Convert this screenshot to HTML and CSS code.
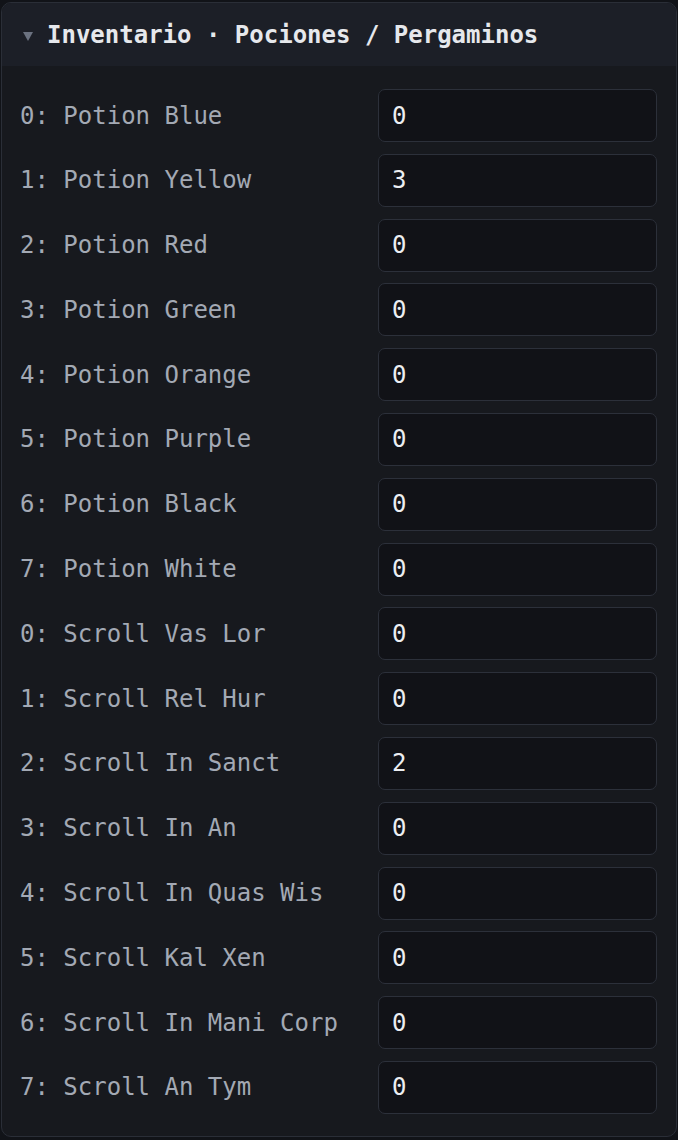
FILE: index.html
```html
<!DOCTYPE html>
<html lang="es">
<head>
    <meta charset="UTF-8">
    <meta name="viewport" content="width=device-width, initial-scale=1.0">
    <title>Inventario</title>
    <link rel="stylesheet" href="styles.css">
</head>
<body>
    <details class="panel" open>
        <summary class="panel-head">
            <span class="caret"></span>
            <span class="panel-title">Inventario · Pociones / Pergaminos</span>
        </summary>

        <div class="panel-body">
            <label class="item-label" for="p0">0: Potion Blue</label>
            <input class="item-input" type="text" id="p0" value="0">

            <label class="item-label" for="p1">1: Potion Yellow</label>
            <input class="item-input" type="text" id="p1" value="3">

            <label class="item-label" for="p2">2: Potion Red</label>
            <input class="item-input" type="text" id="p2" value="0">

            <label class="item-label" for="p3">3: Potion Green</label>
            <input class="item-input" type="text" id="p3" value="0">

            <label class="item-label" for="p4">4: Potion Orange</label>
            <input class="item-input" type="text" id="p4" value="0">

            <label class="item-label" for="p5">5: Potion Purple</label>
            <input class="item-input" type="text" id="p5" value="0">

            <label class="item-label" for="p6">6: Potion Black</label>
            <input class="item-input" type="text" id="p6" value="0">

            <label class="item-label" for="p7">7: Potion White</label>
            <input class="item-input" type="text" id="p7" value="0">

            <label class="item-label" for="s0">0: Scroll Vas Lor</label>
            <input class="item-input" type="text" id="s0" value="0">

            <label class="item-label" for="s1">1: Scroll Rel Hur</label>
            <input class="item-input" type="text" id="s1" value="0">

            <label class="item-label" for="s2">2: Scroll In Sanct</label>
            <input class="item-input" type="text" id="s2" value="2">

            <label class="item-label" for="s3">3: Scroll In An</label>
            <input class="item-input" type="text" id="s3" value="0">

            <label class="item-label" for="s4">4: Scroll In Quas Wis</label>
            <input class="item-input" type="text" id="s4" value="0">

            <label class="item-label" for="s5">5: Scroll Kal Xen</label>
            <input class="item-input" type="text" id="s5" value="0">

            <label class="item-label" for="s6">6: Scroll In Mani Corp</label>
            <input class="item-input" type="text" id="s6" value="0">

            <label class="item-label" for="s7">7: Scroll An Tym</label>
            <input class="item-input" type="text" id="s7" value="0">
        </div>
    </details>
</body>
</html>
```

FILE: styles.css
```css
body {
    margin: 0;
    padding: 2px 1px 0 1px;
    background-color: #111318;
    font-family: "DejaVu Sans Mono", "Liberation Mono", monospace;
}

.panel {
    background-color: #17191e;
    border: 1px solid #2a2e37;
    border-radius: 10px;
    overflow: hidden;
}

/* cabecera del panel */
.panel-head {
    display: flex;
    align-items: center;
    gap: 14px;
    height: 63px;
    padding: 0 20px 0 21px;
    background-color: #1c1f27;
    list-style: none;
    cursor: pointer;
}

.panel-head::-webkit-details-marker {
    display: none;
}

.caret {
    width: 0;
    height: 0;
    border-left: 5px solid transparent;
    border-right: 5px solid transparent;
    border-top: 9px solid #6b7280;
    margin-top: 3px;
}

.panel-title {
    font-size: 24px;
    font-weight: bold;
    color: #e6e8ec;
}

/* filas del inventario */
.panel-body {
    display: grid;
    grid-template-columns: 1fr 279px;
    align-items: center;
    column-gap: 16px;
    row-gap: 11.8px;
    padding: 23px 19px 22px 18px;
}

.item-label {
    font-size: 24px;
    color: #a3a9b4;
    white-space: nowrap;
}

.item-input {
    box-sizing: border-box;
    width: 100%;
    height: 53px;
    padding: 0 13px;
    font-family: inherit;
    font-size: 24px;
    color: #eceef2;
    background-color: #111217;
    border: 1.5px solid #2c303a;
    border-radius: 7px;
    outline: none;
}

.item-input:focus {
    border-color: #4b5563;
}
```
